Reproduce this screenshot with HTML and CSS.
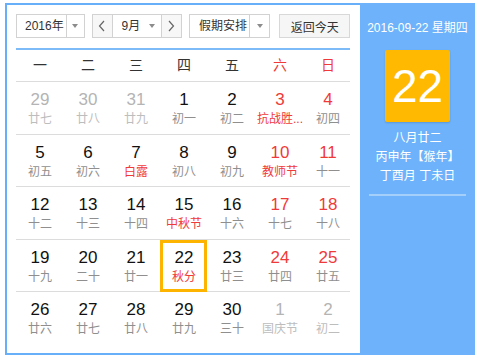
FILE: index.html
```html
<!DOCTYPE html>
<html lang="zh-CN">
<head>
    <meta charset="UTF-8">
    <title>万年历</title>
    <link rel="stylesheet" href="styles.css">
</head>
<body>
<div class="calendar">
    <div class="main">
        <div class="toolbar">
            <div class="select year"><span class="label">2016年</span><span class="drop"><i class="caret"></i></span></div>
            <div class="month-group">
                <span class="nav"><svg width="8" height="12" viewBox="0 0 8 12"><polyline points="6,1 1.5,6 6,11" fill="none" stroke="#666" stroke-width="1.2"/></svg></span>
                <span class="month"><span class="label">9月</span><i class="caret"></i></span>
                <span class="nav"><svg width="8" height="12" viewBox="0 0 8 12"><polyline points="2,1 6.5,6 2,11" fill="none" stroke="#666" stroke-width="1.2"/></svg></span>
            </div>
            <div class="select holiday"><span class="label">假期安排</span><span class="drop"><i class="caret"></i></span></div>
            <div class="today-btn">返回今天</div>
        </div>

        <div class="weekdays">
            <span>一</span><span>二</span><span>三</span><span>四</span><span>五</span><span class="red">六</span><span class="red">日</span>
        </div>

        <div class="week">
            <div class="day other"><span class="num">29</span><span class="lunar">廿七</span></div>
            <div class="day other"><span class="num">30</span><span class="lunar">廿八</span></div>
            <div class="day other"><span class="num">31</span><span class="lunar">廿九</span></div>
            <div class="day"><span class="num">1</span><span class="lunar">初一</span></div>
            <div class="day"><span class="num">2</span><span class="lunar">初二</span></div>
            <div class="day weekend"><span class="num">3</span><span class="lunar fest">抗战胜...</span></div>
            <div class="day weekend"><span class="num">4</span><span class="lunar">初四</span></div>
        </div>
        <div class="week">
            <div class="day"><span class="num">5</span><span class="lunar">初五</span></div>
            <div class="day"><span class="num">6</span><span class="lunar">初六</span></div>
            <div class="day"><span class="num">7</span><span class="lunar fest">白露</span></div>
            <div class="day"><span class="num">8</span><span class="lunar">初八</span></div>
            <div class="day"><span class="num">9</span><span class="lunar">初九</span></div>
            <div class="day weekend"><span class="num">10</span><span class="lunar fest">教师节</span></div>
            <div class="day weekend"><span class="num">11</span><span class="lunar">十一</span></div>
        </div>
        <div class="week">
            <div class="day"><span class="num">12</span><span class="lunar">十二</span></div>
            <div class="day"><span class="num">13</span><span class="lunar">十三</span></div>
            <div class="day"><span class="num">14</span><span class="lunar">十四</span></div>
            <div class="day"><span class="num">15</span><span class="lunar fest">中秋节</span></div>
            <div class="day"><span class="num">16</span><span class="lunar">十六</span></div>
            <div class="day weekend"><span class="num">17</span><span class="lunar">十七</span></div>
            <div class="day weekend"><span class="num">18</span><span class="lunar">十八</span></div>
        </div>
        <div class="week">
            <div class="day"><span class="num">19</span><span class="lunar">十九</span></div>
            <div class="day"><span class="num">20</span><span class="lunar">二十</span></div>
            <div class="day"><span class="num">21</span><span class="lunar">廿一</span></div>
            <div class="day today"><span class="num">22</span><span class="lunar fest">秋分</span></div>
            <div class="day"><span class="num">23</span><span class="lunar">廿三</span></div>
            <div class="day weekend"><span class="num">24</span><span class="lunar">廿四</span></div>
            <div class="day weekend"><span class="num">25</span><span class="lunar">廿五</span></div>
        </div>
        <div class="week last">
            <div class="day"><span class="num">26</span><span class="lunar">廿六</span></div>
            <div class="day"><span class="num">27</span><span class="lunar">廿七</span></div>
            <div class="day"><span class="num">28</span><span class="lunar">廿八</span></div>
            <div class="day"><span class="num">29</span><span class="lunar">廿九</span></div>
            <div class="day"><span class="num">30</span><span class="lunar">三十</span></div>
            <div class="day other"><span class="num">1</span><span class="lunar">国庆节</span></div>
            <div class="day other"><span class="num">2</span><span class="lunar">初二</span></div>
        </div>
    </div>

    <div class="side">
        <div class="side-date">2016-09-22 星期四</div>
        <div class="big-day">22</div>
        <div class="side-info">
            <p>八月廿二</p>
            <p>丙申年【猴年】</p>
            <p>丁酉月 丁未日</p>
        </div>
        <div class="side-line"></div>
    </div>
</div>
</body>
</html>
```

FILE: styles.css
```css
body {
    margin: 0;
    padding: 3px 0 0 5px;
    background: #fff;
    font-family: "Liberation Sans", Arial, "Noto Sans CJK SC", sans-serif;
    color: #000;
}
.calendar {
    display: flex;
    width: 470px;
    height: 352px;
}
.main {
    width: 355px;
    box-sizing: border-box;
    border: 2px solid #68aff9;
    border-right: none;
    padding: 9px 10px 0 9px;
}

/* toolbar */
.toolbar {
    display: flex;
    height: 24px;
    font-size: 12px;
    color: #333;
}
.select, .month-group, .today-btn {
    box-sizing: border-box;
    height: 24px;
    border: 1px solid #d2d2d2;
    display: flex;
    align-items: center;
}
.label {
    flex: 1;
    line-height: 22px;
    white-space: nowrap;
    overflow: hidden;
}
.year {
    width: 69px;
    padding-left: 8px;
}
.holiday {
    width: 82px;
    margin-left: 7px;
    padding-left: 9px;
}
.drop {
    width: 17px;
    height: 22px;
    border-left: 1px solid #d2d2d2;
    display: flex;
    align-items: center;
    justify-content: center;
}
.holiday .drop {
    width: 19px;
}
.caret {
    width: 0;
    height: 0;
    border-left: 3.5px solid transparent;
    border-right: 3.5px solid transparent;
    border-top: 4px solid #8c8c8c;
}
.month-group {
    width: 91px;
    margin-left: 7px;
}
.nav {
    width: 19px;
    height: 22px;
    background: #f7f7f7;
    display: flex;
    align-items: center;
    justify-content: center;
}
.month {
    flex: 1;
    height: 22px;
    border-left: 1px solid #d2d2d2;
    border-right: 1px solid #d2d2d2;
    display: flex;
    align-items: center;
    padding: 0 6px 0 9px;
}
.today-btn {
    width: 71px;
    margin-left: 9px;
    justify-content: center;
    background: #f6f6f6;
    border-color: #d8d8d8;
}

/* grid */
.weekdays {
    margin-top: 10px;
    border-top: 2px solid #7dbaf8;
    border-bottom: 1px solid #dcdcdc;
    height: 31px;
    display: grid;
    grid-template-columns: repeat(7, 48px);
    font-size: 14px;
    line-height: 31px;
    text-align: center;
    color: #333;
}
.red {
    color: #f03a3a;
}
.week {
    display: grid;
    grid-template-columns: repeat(7, 48px);
    height: 52.5px;
    box-sizing: border-box;
    border-bottom: 1px solid #dcdcdc;
}
.week.last {
    border-bottom: none;
}
.day {
    position: relative;
    display: flex;
    flex-direction: column;
    align-items: center;
    padding-top: 8px;
}
.num {
    font-size: 17px;
    line-height: 20px;
    color: #111;
}
.lunar {
    margin-top: 1px;
    font-size: 12px;
    line-height: 16px;
    color: #8f8f8f;
    white-space: nowrap;
}
.weekend .num {
    color: #f03a3a;
}
.lunar.fest {
    color: #f03a3a;
}
.other .num {
    color: #b4b4b4;
}
.other .lunar {
    color: #bdbdbd;
}
.today::after {
    content: "";
    position: absolute;
    top: 0;
    left: 0;
    right: 1px;
    bottom: -1px;
    border: 3px solid #fdb400;
}

/* right panel */
.side {
    width: 115px;
    background: #6db2fa;
    color: #fff;
    text-align: center;
    padding-top: 16px;
    box-sizing: border-box;
}
.side-date {
    font-size: 12px;
    line-height: 18px;
}
.big-day {
    width: 65px;
    height: 72px;
    margin: 13px auto 0;
    background: #ffb900;
    border-radius: 2px;
    box-shadow: 0 1px 2px rgba(0, 0, 0, 0.15);
    font-size: 46px;
    line-height: 72px;
}
.side-info {
    margin-top: 7px;
    font-size: 12px;
    line-height: 19px;
}
.side-info p {
    margin: 0;
}
.side-line {
    width: 97px;
    height: 2px;
    margin: 8px auto 0;
    background: #a5cffb;
}
```
